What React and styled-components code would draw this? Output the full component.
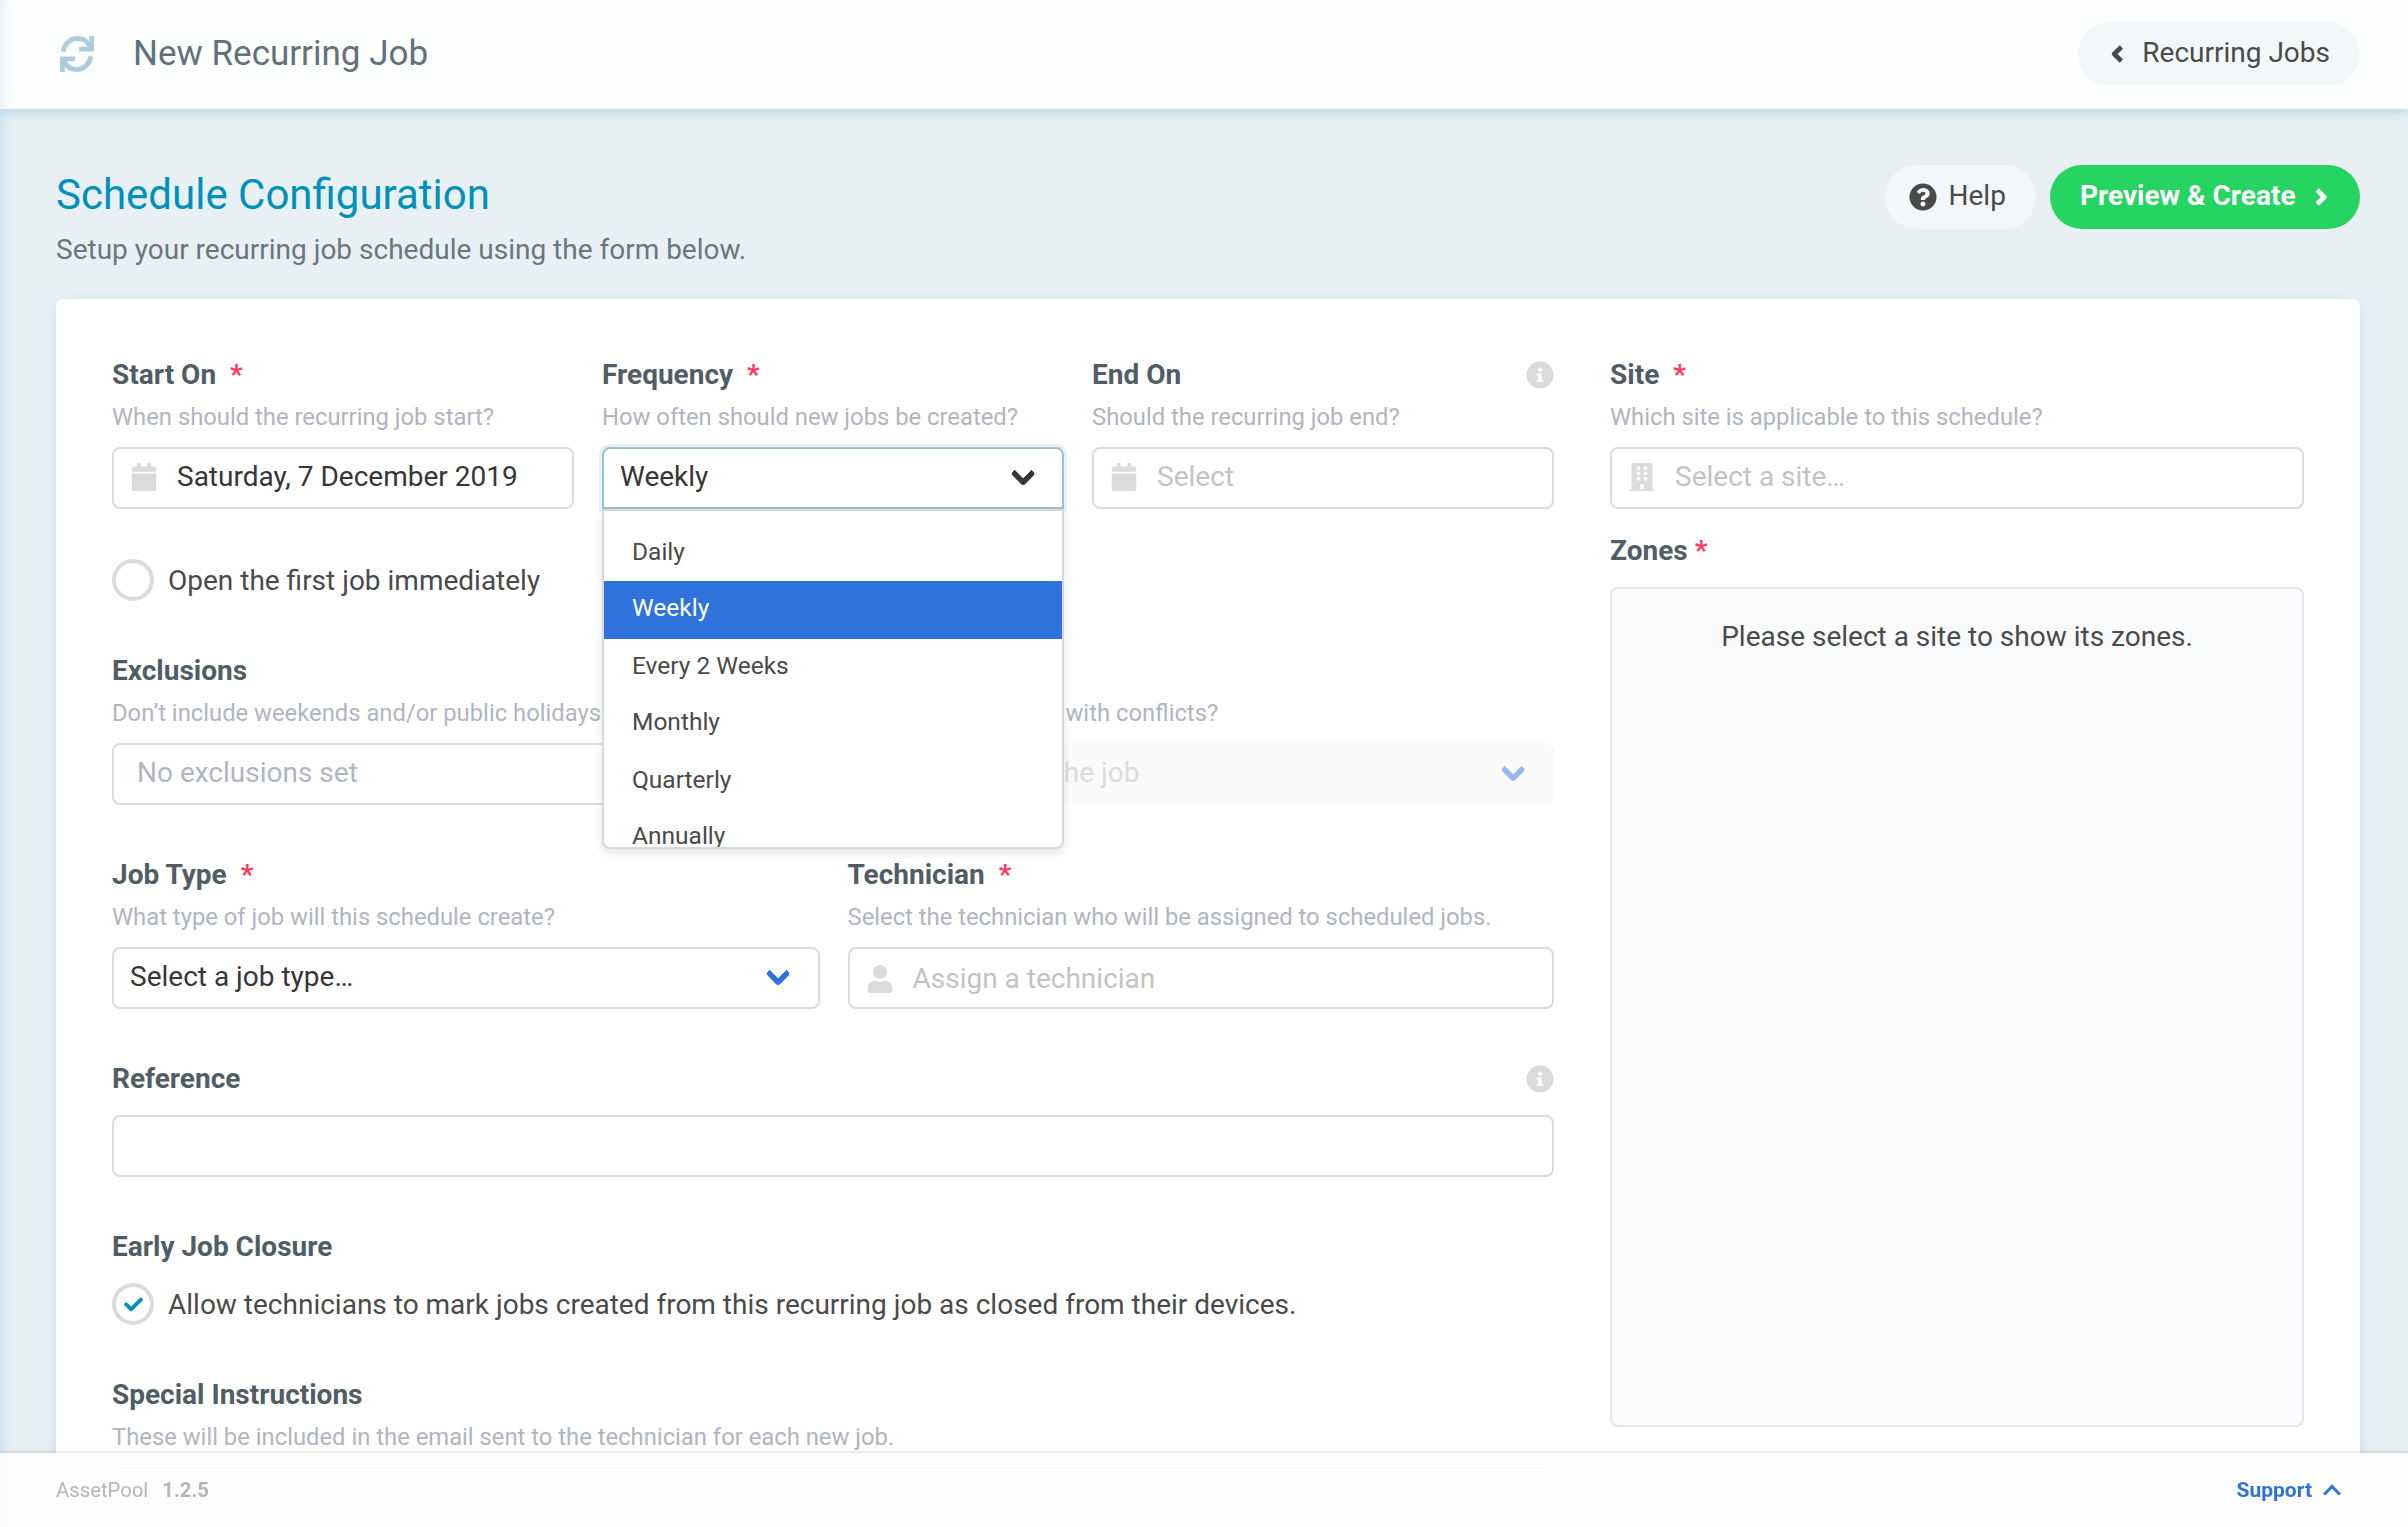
import styled, { createGlobalStyle, css } from 'styled-components';
import {
  FaBuilding,
  FaCalendar,
  FaCheck,
  FaInfoCircle,
  FaQuestionCircle,
  FaUser,
} from 'react-icons/fa';

const GlobalStyle = createGlobalStyle`
  * {
    box-sizing: border-box;
  }

  body {
    margin: 0;
    overflow: hidden;
    background: #e8f0f4;
    color: #4a4a4a;
    font-family: Roboto, 'Liberation Sans', sans-serif;
    font-size: 28px;
    line-height: 42px;
  }

  p, h1, h2 {
    margin: 0;
    font-weight: 400;
  }

  svg {
    display: block;
    flex: none;
  }
`;

const Page = styled.div`
  height: 1527px;
  overflow: hidden;
  box-shadow: inset 10px 0 10px -6px #cde2ee;
`;

const Header = styled.header`
  display: flex;
  align-items: center;
  justify-content: space-between;
  height: 109px;
  padding: 0 48px 2px 60px;
  background: #fdfefe;
  box-shadow: 0 2px 12px rgba(110, 180, 215, 0.5), inset 10px 0 10px -6px #e2eff6;
`;

const HeaderTitle = styled.h1`
  display: flex;
  align-items: center;
  gap: 39px;
  color: #62717b;
  font-size: 35px;
`;

const Button = styled.button`
  display: flex;
  align-items: center;
  height: 64px;
  padding: 0 ${({ $right }) => $right}px 2px ${({ $left }) => $left}px;
  gap: ${({ $gap }) => $gap || 12}px;
  border: 0;
  border-radius: 32px;
  background: #f2f7fa;
  color: #4a4a4a;
  font: inherit;

  svg {
    margin-top: 2px;
  }

  ${({ $primary }) =>
    $primary &&
    css`
      background: #26d462;
      color: #fff;
      font-weight: 700;
    `}
`;

const Main = styled.main`
  padding: 56px 48px 0 56px;
`;

const Intro = styled.div`
  display: flex;
  justify-content: space-between;
  height: 134px;
`;

const Title = styled.h2`
  padding-top: 1px;
  color: #0090bc;
  font-size: 42px;
  line-height: 58px;
`;

const Subtitle = styled.p`
  margin-top: 5px;
  color: #69767f;
`;

const Actions = styled.div`
  display: flex;
  gap: 14px;
`;

const Card = styled.section`
  display: grid;
  grid-template-columns: 1442px 694px;
  gap: 56px;
  height: 1400px;
  padding: 56px;
  border-radius: 8px;
  background: #fff;
  box-shadow: 0 4px 14px rgba(120, 190, 215, 0.3);
`;

const Form = styled.div`
  display: flex;
  flex-direction: column;
  gap: 50px;
`;

const Columns = styled.div`
  display: grid;
  grid-template-columns: ${({ $template }) => $template};
  gap: 28px;
`;

const Field = styled.div`
  position: relative;
  min-width: 0;
`;

const Label = styled.div`
  display: flex;
  align-items: center;
  height: 42px;
  padding-bottom: 2px;
  color: #515d65;
  font-weight: 700;

  svg {
    margin-left: auto;
    color: #dbdbdb;
  }
`;

const Required = styled.span`
  margin-left: ${({ $tight }) => ($tight ? '7px' : '14px')};
  color: #ff3860;
`;

const Hint = styled.p`
  height: 36px;
  margin-left: ${({ $offset }) => $offset || '0'};
  padding-top: 2px;
  color: #b0b5bf;
  font-size: 23.8px;
  line-height: 36px;
  white-space: nowrap;
`;

const Control = styled.div`
  display: flex;
  align-items: center;
  height: 62px;
  margin-top: 14px;
  padding: ${({ $low }) => ($low ? '2px 26px 0' : '0 26px 2px')};
  padding-left: ${({ $left }) => $left || '16px'};
  border: 2px solid #dbdbdb;
  border-radius: 8px;
  background: #fff;
  color: ${({ $color }) => $color || '#363636'};
  white-space: nowrap;

  ${({ $active }) =>
    $active &&
    css`
      border-color: #9cc1d1;
      border-radius: 8px 8px 0 0;
      box-shadow: 0 0 0 3px #e8f1f5;
    `}

  ${({ $disabled }) =>
    $disabled &&
    css`
      border-color: #fafafa;
      background: #fafafa;
    `}
`;

const Leading = styled.span`
  display: flex;
  justify-content: center;
  width: 28px;
  margin-right: 19px;
  color: #dbdbdb;
`;

const Caret = styled.span`
  width: 17.5px;
  height: 17.5px;
  margin: 0 5px 7px auto;
  border: 6px solid ${({ $color }) => $color};
  border-top: 0;
  border-right: 0;
  border-radius: 4px;
  transform: rotate(-45deg);
`;

const Menu = styled.ul`
  position: absolute;
  z-index: 2;
  top: 154px;
  left: 0;
  right: 0;
  height: 340px;
  margin: 0;
  padding: 14px 0 0;
  overflow: hidden;
  list-style: none;
  border: 2px solid #d9d9db;
  border-radius: 0 0 8px 8px;
  background: #fff;
  box-shadow: 0 4px 8px rgba(10, 10, 10, 0.1);
`;

const Option = styled.li`
  height: 56px;
  padding-left: 28px;
  background: ${({ $selected }) => ($selected ? '#3072dc' : 'transparent')};
  color: ${({ $selected }) => ($selected ? '#fff' : '#4a4a4a')};
  font-size: 24.5px;
  line-height: 54px;

  &:nth-child(even) {
    height: 58px;
  }
`;

const Check = styled.div`
  display: flex;
  align-items: center;
  gap: 14px;
  height: 42px;
  margin-top: ${({ $labelled }) => ($labelled ? '14px' : '0')};
`;

const Circle = styled.span`
  display: flex;
  align-items: center;
  justify-content: center;
  width: 42px;
  height: 42px;
  border: 4px solid #dbdbdb;
  border-radius: 50%;
  background: #fff;
  color: #0090bc;
`;

const CheckText = styled.span`
  padding-top: 2px;
`;

const Zones = styled.div`
  height: 840px;
  margin-top: 14px;
  padding: 27px;
  border: 2px solid #e1e5ee;
  border-radius: 8px;
  background: #fafbfd;
  text-align: center;
`;

const SiteField = styled.div`
  margin-bottom: 22px;
`;

const TextArea = styled.div`
  height: 200px;
  margin-top: 14px;
  border: 2px solid #dbdbdb;
  border-radius: 8px;
`;

const Footer = styled.footer`
  position: fixed;
  z-index: 3;
  left: 0;
  right: 0;
  bottom: 0;
  display: flex;
  align-items: center;
  justify-content: space-between;
  height: 74px;
  padding: 0 67px 0 56px;
  background: rgba(254, 254, 254, 0.93);
  box-shadow: 0 -2px 0 rgba(10, 10, 10, 0.07), 0 -6px 12px rgba(10, 10, 10, 0.02);
`;

const Version = styled.span`
  color: #b5b5b5;
  font-size: 20.3px;

  strong {
    margin-left: 9px;
  }
`;

const Support = styled.a`
  display: flex;
  align-items: center;
  gap: 11px;
  color: #3072dc;
  font-size: 21px;
  font-weight: 700;
`;

const frequencies = ['Daily', 'Weekly', 'Every 2 Weeks', 'Monthly', 'Quarterly', 'Annually'];

function FormField({ label, hint, hintOffset, required, info, children }) {
  return (
    <Field>
      <Label>
        {label}
        {required && <Required>*</Required>}
        {info && <FaInfoCircle size={28} />}
      </Label>
      {hint && <Hint $offset={hintOffset}>{hint}</Hint>}
      {children}
    </Field>
  );
}

function RecurringIcon() {
  return (
    <svg width="34" height="36" viewBox="0 0 34 36" fill="none" stroke="#aeccda" strokeWidth="4.8">
      <path d="M3.200 15.600C4.200 8 10 2.400 17.300 2.400c5.700 0 10.200 3 12.700 8.200" />
      <path d="M31.600 0v13.100H19" />
      <path d="M30.800 20.400C29.800 28 24 33.600 16.700 33.600 11 33.600 6.500 30.600 4 25.400" />
      <path d="M2.400 36V22.900H15" />
    </svg>
  );
}

function SideChevron({ right }) {
  return (
    <svg width="12.5" height="18" viewBox="0 0 12.5 18" fill="none" stroke="currentColor" strokeWidth="4.6" strokeLinejoin="round">
      <path d={right ? 'M2.100 2 9.300 9l-7.200 7' : 'M10.400 2 3.200 9l7.200 7'} />
    </svg>
  );
}

function App() {
  return (
    <Page>
      <GlobalStyle />
      <Header>
        <HeaderTitle>
          <RecurringIcon />
          New Recurring Job
        </HeaderTitle>
        <Button $left={33} $right={30} $gap={19}>
          <SideChevron />
          Recurring Jobs
        </Button>
      </Header>

      <Main>
        <Intro>
          <div>
            <Title>Schedule Configuration</Title>
            <Subtitle>Setup your recurring job schedule using the form below.</Subtitle>
          </div>
          <Actions>
            <Button $left={24} $right={30}>
              <FaQuestionCircle size={28} />
              Help
            </Button>
            <Button $primary $left={30} $right={33} $gap={19}>
              Preview &amp; Create
              <SideChevron right />
            </Button>
          </Actions>
        </Intro>

        <Card>
          <Form>
            <Columns $template="repeat(3, 1fr)">
              <FormField label="Start On" hint="When should the recurring job start?" required>
                <Control>
                  <Leading><FaCalendar size={28} /></Leading>
                  Saturday, 7 December 2019
                </Control>
              </FormField>
              <FormField label="Frequency" hint="How often should new jobs be created?" required>
                <Control $active>
                  Weekly
                  <Caret $color="#363636" />
                </Control>
                <Menu>
                  {frequencies.map((name) => (
                    <Option key={name} $selected={name === 'Weekly'}>{name}</Option>
                  ))}
                </Menu>
              </FormField>
              <FormField label="End On" hint="Should the recurring job end?" info>
                <Control $color="#c3c3c3">
                  <Leading><FaCalendar size={28} /></Leading>
                  Select
                </Control>
              </FormField>
            </Columns>

            <Check>
              <Circle />
              <CheckText>Open the first job immediately</CheckText>
            </Check>

            <Columns $template="707px 707px">
              <FormField label="Exclusions" hint="Don’t include weekends and/or public holidays?">
                <Control $left="23px" $color="#b0b5bf">No exclusions set</Control>
              </FormField>
              <FormField label="Conflicts" hint="What should happen with conflicts?" hintOffset="-4px">
                <Control $disabled $color="#dadbdf">
                  Don’t schedule the job
                  <Caret $color="#98b8ee" />
                </Control>
              </FormField>
            </Columns>

            <Columns $template="707.5px 706.5px">
              <FormField label="Job Type" hint="What type of job will this schedule create?" required>
                <Control>
                  Select a job type…
                  <Caret $color="#3072dc" />
                </Control>
              </FormField>
              <FormField
                label="Technician"
                hint="Select the technician who will be assigned to scheduled jobs."
                required
              >
                <Control $low $color="#c3c3c3">
                  <Leading><FaUser size={28} /></Leading>
                  Assign a technician
                </Control>
              </FormField>
            </Columns>

            <FormField label="Reference" info>
              <Control />
            </FormField>

            <FormField label="Early Job Closure">
              <Check $labelled>
                <Circle><FaCheck size={19} /></Circle>
                <CheckText>
                  Allow technicians to mark jobs created from this recurring job as closed from their devices.
                </CheckText>
              </Check>
            </FormField>

            <FormField
              label="Special Instructions"
              hint="These will be included in the email sent to the technician for each new job."
            >
              <TextArea />
            </FormField>
          </Form>

          <div>
            <SiteField>
              <FormField label="Site" hint="Which site is applicable to this schedule?" required>
                <Control $color="#c3c3c3">
                  <Leading><FaBuilding size={28} /></Leading>
                  Select a site…
                </Control>
              </FormField>
            </SiteField>
            <Label>
              Zones
              <Required $tight>*</Required>
            </Label>
            <Zones>Please select a site to show its zones.</Zones>
          </div>
        </Card>
      </Main>

      <Footer>
        <Version>
          AssetPool <strong>1.2.5</strong>
        </Version>
        <Support>
          Support
          <svg width="18" height="12" viewBox="0 0 18 12" fill="none" stroke="currentColor" strokeWidth="3">
            <path d="M1.200 10.500 9 2.500l7.800 8" />
          </svg>
        </Support>
      </Footer>
    </Page>
  );
}

export default App;
